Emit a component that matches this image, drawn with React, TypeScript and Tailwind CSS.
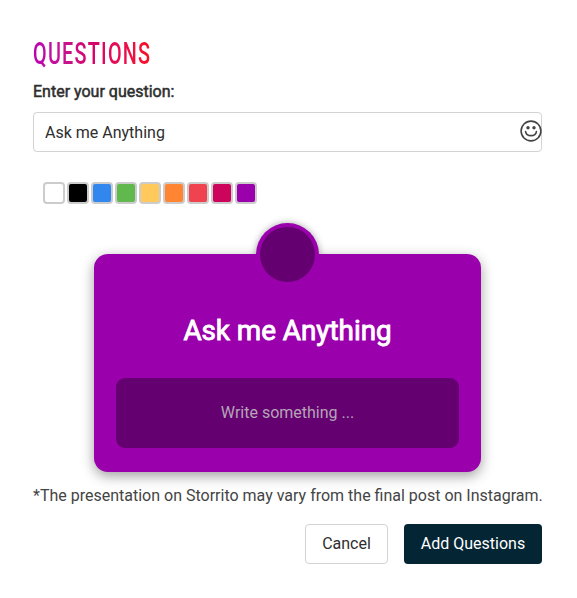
import { useState } from 'react';

const COLORS = [
  { name: 'White', main: '#ffffff', dark: '#efefef', text: '#000000' },
  { name: 'Black', main: '#000000', dark: '#333333', text: '#ffffff' },
  { name: 'Blue', main: '#3287ee', dark: '#2160ad', text: '#ffffff' },
  { name: 'Green', main: '#61b84c', dark: '#438235', text: '#ffffff' },
  { name: 'Yellow', main: '#ffc95c', dark: '#bb9040', text: '#ffffff' },
  { name: 'Orange', main: '#ff8533', dark: '#b95e22', text: '#ffffff' },
  { name: 'Red', main: '#f04350', dark: '#ad2e38', text: '#ffffff' },
  { name: 'Pink', main: '#cc045c', dark: '#8c0340', text: '#ffffff' },
  { name: 'Purple', main: '#9a00ab', dark: '#650070', text: '#ffffff' },
];

const SmileyIcon = () => (
  <svg viewBox="0 0 22 22" className="w-[22px] h-[22px]" fill="none" stroke="#444" strokeWidth="1.6">
    <circle cx="11" cy="11" r="9.9" />
    <circle cx="8" cy="7.8" r="1.7" fill="#444" stroke="none" />
    <circle cx="14" cy="7.8" r="1.7" fill="#444" stroke="none" />
    <path d="M5.6 11.6c.8 5.4 10 5.4 10.8 0" strokeLinecap="round" strokeWidth="1.6" />
  </svg>
);

interface PreviewProps { question: string; color: typeof COLORS[number]; }

const QuestionPreview = ({ question, color }: PreviewProps) => (
  <div
    className="relative w-[387px] h-[218px] mx-auto rounded-[14px] px-[22px] pt-[57px] shadow-[0_4px_13px_rgba(0,0,0,0.38)]"
    style={{ background: color.main }}
  >
    <div
      className="absolute left-[162px] -top-[31px] w-[63px] h-[63px] rounded-full shadow-[0_0_7px_rgba(0,0,0,0.34)] [clip-path:inset(-12px_-12px_32px_-12px)]"
      style={{ background: color.main }}
    />
    <div
      className="absolute left-[166px] -top-[27px] w-[55px] h-[55px] rounded-full"
      style={{ background: color.dark }}
    />
    <h2
      className="text-[27.8px] leading-10 text-center [-webkit-text-stroke:0.9px_currentColor]"
      style={{ color: color.text }}
    >
      {question}
    </h2>
    <div
      className="mt-[27px] h-[70px] rounded-[9px] flex items-center justify-center text-base text-[#b4a5b7]"
      style={{ background: color.dark }}
    >
      Write something ...
    </div>
  </div>
);

export default function App() {
  const [question, setQuestion] = useState('Ask me Anything');
  const [selected, setSelected] = useState(8);

  return (
    <div className="w-[577px] h-[598px] bg-white pl-[33px] pr-[35px] pt-[34px] font-[Roboto,sans-serif] text-base text-[#2e2e2e]">
      <h1 className="h-10 w-fit origin-left scale-x-[0.64] text-[31px] leading-10 font-medium tracking-[1.9px] whitespace-nowrap bg-linear-to-r from-[#b900b4] via-[#d6006c] to-[#fa0f1c] bg-clip-text text-transparent">
        QUESTIONS
      </h1>
      <label htmlFor="question" className="block mt-[6px] h-6 leading-6 [-webkit-text-stroke:0.5px_currentColor]">
        Enter your question:
      </label>
      <div className="mt-2 h-10 flex items-center border border-[#d3d3d3] rounded-[4px]">
        <input
          id="question"
          className="flex-1 min-w-0 h-full pl-[11px] outline-none"
          value={question}
          onChange={(e) => setQuestion(e.target.value)}
        />
        <button type="button" aria-label="Emoji" className="-mr-px mb-[2px]">
          <SmileyIcon />
        </button>
      </div>
      <div className="mt-[30px] ml-[10px] flex gap-[2px]">
        {COLORS.map((c, idx) => (
          <button
            key={c.name}
            type="button"
            aria-label={c.name}
            onClick={() => setSelected(idx)}
            className="w-[22px] h-[22px] border-2 border-[#ccc] rounded-[4px]"
            style={{ background: c.main }}
          />
        ))}
      </div>
      <div className="mt-[50px]">
        <QuestionPreview question={question} color={COLORS[selected]} />
      </div>
      <p className="mt-3 leading-6 whitespace-nowrap text-[#444]">
        *The presentation on Storrito may vary from the final post on Instagram.
      </p>
      <div className="mt-4 flex justify-end gap-4">
        <button type="button" className="w-[83px] h-10 border border-[#d3d3d3] rounded-[4px]">Cancel</button>
        <button type="button" className="w-[138px] h-10 rounded-[4px] bg-[#042534] text-white">Add Questions</button>
      </div>
    </div>
  );
}
